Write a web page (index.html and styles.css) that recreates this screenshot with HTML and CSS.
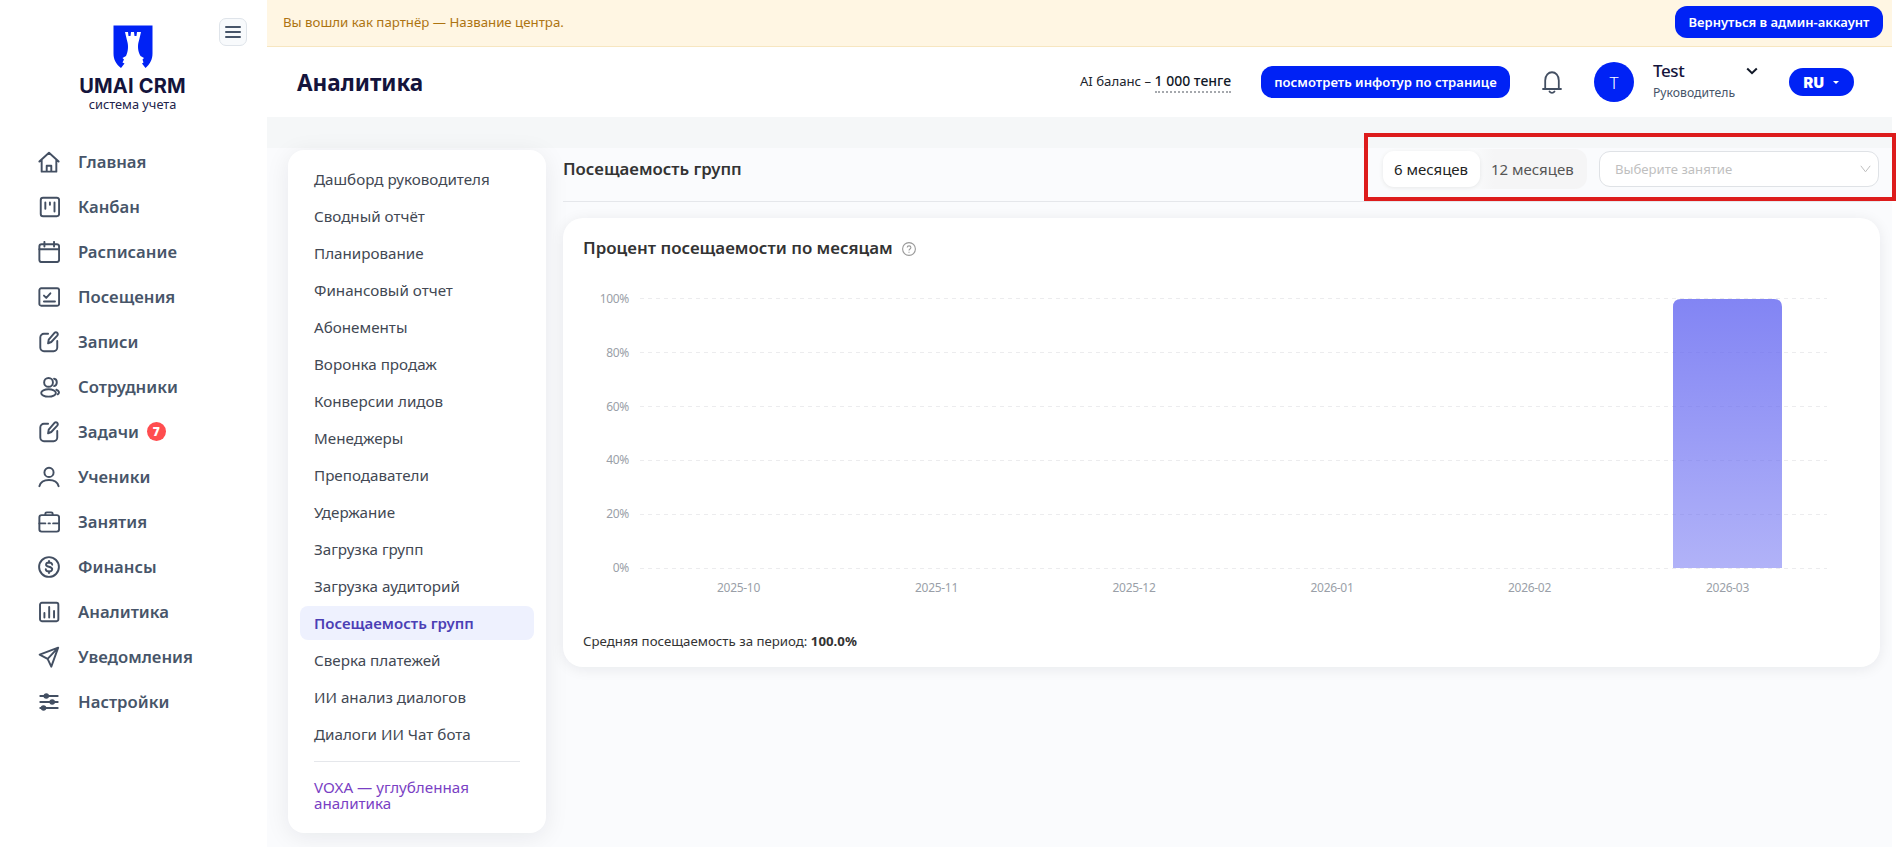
FILE: index.html
```html
<!DOCTYPE html>
<html lang="ru">
<head>
  <meta charset="UTF-8" />
  <meta name="viewport" content="width=device-width, initial-scale=1.0"/>
  <title>UMAI CRM — Аналитика</title>
  <link rel="stylesheet" href="styles.css">
</head>
<body>
  <div class="app">
    <aside class="sidebar">
      <button class="burger" aria-label="Меню"><span></span><span></span><span></span></button>
      <div class="logo">
        <svg width="40" height="43" viewBox="0 0 40 43">
          <path d="M.5.5h39v28c0 6-2.500 10.500-7 14.500L29 38.500l1.500-1-1-3 1.500-1.500-3.500-2c-3-5-3-11-1.500-15.500L28 7h-4l-.5 4h-2L21 7h-3l-.5 4h-2L15 7h-3l2 8.500c1.500 4.500 1.500 10.500-1 15.500l-3.500 2 1.500 1.500-1.500 3 2 1L8 43C3 39 .5 34.500.5 28.500z" fill="#0022f5"/>
        </svg>
        <div class="logo-name">UMAI CRM</div>
        <div class="logo-sub">система учета</div>
      </div>
      <nav class="nav">
        <a class="nav-item"><svg viewBox="0 0 24 24"><path d="M1.500 11.500 12 2l10.500 9.500M4 9.500V22.500h16V9.500M9.500 22.500V16h5v6.500"/></svg><span>Главная</span></a>
        <a class="nav-item"><svg viewBox="0 0 24 24"><rect x="3" y="2" width="20" height="20" rx="2.500"/><path d="M8 7v7M13 7v2.500M18 7v10"/></svg><span>Канбан</span></a>
        <a class="nav-item"><svg viewBox="0 0 24 24"><rect x="1.500" y="3.500" width="21.500" height="19.500" rx="2.500"/><path d="M1.500 9H23M7 1v5M17.500 1v5"/></svg><span>Расписание</span></a>
        <a class="nav-item"><svg viewBox="0 0 24 24"><rect x="1.500" y="2.500" width="21.500" height="19" rx="2"/><path d="M6.500 10.500 9 13l4.500-5M6.500 17h12"/></svg><span>Посещения</span></a>
        <a class="nav-item"><svg viewBox="0 0 24 24"><path d="M11 3H6.500a4 4 0 0 0-4 4V18a4 4 0 0 0 4 4H17a4 4 0 0 0 4-4v-7M11 13.500l.7-4L18 2q1.500-1.200 3 0 1.200 1.500 0 3L14.500 12z"/></svg><span>Записи</span></a>
        <a class="nav-item"><svg viewBox="0 0 24 24"><circle cx="11.500" cy="7" r="4.800"/><ellipse cx="11.500" cy="18.500" rx="8" ry="4"/><path d="M17.500 3c4 .5 4 7 0 8M20 15c3.500 1 3.500 4 1.500 5"/></svg><span>Сотрудники</span></a>
        <a class="nav-item"><svg viewBox="0 0 24 24"><path d="M11 3H6.500a4 4 0 0 0-4 4V18a4 4 0 0 0 4 4H17a4 4 0 0 0 4-4v-7M11 13.500l.7-4L18 2q1.500-1.200 3 0 1.200 1.500 0 3L14.500 12z"/></svg><span>Задачи</span><b class="badge">7</b></a>
        <a class="nav-item"><svg viewBox="0 0 24 24"><circle cx="12" cy="7" r="5"/><path d="M1.500 22c2.500-9 18.500-9 21 0"/></svg><span>Ученики</span></a>
        <a class="nav-item"><svg viewBox="0 0 24 24"><rect x="1.500" y="4.500" width="21.500" height="18" rx="2.500"/><path d="M8 4.500V3q0-1.500 1.500-1.500h5Q16 1.500 16 3v1.500M1.500 13.500H8M11.500 13.500h1.500M16.500 13.500H23"/></svg><span>Занятия</span></a>
        <a class="nav-item"><svg viewBox="0 0 24 24"><circle cx="12" cy="12" r="10.800"/><path d="M15.500 9.500c-.5-3-6.500-3.300-6.700 0C8.700 12.500 15.500 11 15.500 14.500c-.3 3.500-6.700 3-7 0M12 5.500v2M12 16.500v2"/></svg><span>Финансы</span></a>
        <a class="nav-item"><svg viewBox="0 0 24 24"><rect x="2.200" y="2" width="20" height="20" rx="2"/><path d="M7 13v5M12.200 6.500V18M17.500 11v7"/></svg><span>Аналитика</span></a>
        <a class="nav-item"><svg viewBox="0 0 24 24"><path d="M22 1.800 1.800 9.500l8.700 4.500L14.500 22.500zM22 1.800 10.500 14"/></svg><span>Уведомления</span></a>
        <a class="nav-item"><svg viewBox="0 0 24 24"><path d="M2.500 5.500h19M2.500 12h19M2.500 18.500h19"/><circle cx="9" cy="5.500" r="2"/><circle cx="15.500" cy="12" r="2"/><circle cx="6" cy="18.500" r="2"/></svg><span>Настройки</span></a>
      </nav>
    </aside>

    <div class="page">
      <div class="partner-bar">
        <span>Вы вошли как партнёр — Название центра.</span>
        <button class="btn btn-admin">Вернуться в админ-аккаунт</button>
      </div>

      <header class="header">
        <h1>Аналитика</h1>
        <div class="balance">AI баланс – <b>1 000 тенге</b></div>
        <button class="btn btn-tour">посмотреть инфотур по странице</button>
        <svg class="bell" viewBox="0 0 20 23"><path d="M1 18h18M3.200 17.500V9.500c0-11 13.600-11 13.600 0v8M7.500 20.500c1.200 1.800 3.800 1.800 5 0"/></svg>
        <div class="avatar">T</div>
        <div class="user">
          <div class="user-name">Test</div>
          <div class="user-role">Руководитель</div>
        </div>
        <svg class="user-arrow" viewBox="0 0 12 8"><path d="M1.200 1.500 6 6.200l4.800-4.700"/></svg>
        <button class="lang">RU<i></i></button>
      </header>

      <div class="content">
        <div class="submenu">
          <a>Дашборд руководителя</a>
          <a>Сводный отчёт</a>
          <a>Планирование</a>
          <a>Финансовый отчет</a>
          <a>Абонементы</a>
          <a>Воронка продаж</a>
          <a>Конверсии лидов</a>
          <a>Менеджеры</a>
          <a>Преподаватели</a>
          <a>Удержание</a>
          <a>Загрузка групп</a>
          <a>Загрузка аудиторий</a>
          <a class="active">Посещаемость групп</a>
          <a>Сверка платежей</a>
          <a>ИИ анализ диалогов</a>
          <a>Диалоги ИИ Чат бота</a>
          <hr>
          <a class="voxa">VOXA — углубленная аналитика</a>
        </div>

        <main class="main">
          <div class="toolbar">
            <h2>Посещаемость групп</h2>
            <div class="segmented">
              <span class="selected">6 месяцев</span>
              <span>12 месяцев</span>
            </div>
            <div class="select">
              <span>Выберите занятие</span>
              <svg viewBox="0 0 11 8"><path d="M.8.8 5.500 6.800 10.200.8"/></svg>
            </div>
            <div class="highlight"></div>
          </div>

          <section class="card">
            <h3>Процент посещаемости по месяцам
              <svg viewBox="0 0 14 14"><circle cx="7" cy="7" r="6.400"/><path d="M5.200 5.600c.1-2.300 3.700-2.200 3.700 0C8.900 7 7 6.900 7 8.500M7 9.800v1"/></svg>
            </h3>
            <svg class="chart" width="1277" height="330" viewBox="0 0 1277 330">
              <defs>
                <linearGradient id="barFill" x1="0" y1="0" x2="0" y2="1">
                  <stop offset="0" stop-color="#6366f1" stop-opacity=".8"/>
                  <stop offset="1" stop-color="#6366f1" stop-opacity=".5"/>
                </linearGradient>
              </defs>
              <g class="grid">
                <path d="M57 20.500h1187M57 74.500h1187M57 128.500h1187M57 182.500h1187M57 236.500h1187M57 290.500h1187"/>
              </g>
              <path d="M1090 290V29q0-8 8-8h93q8 0 8 8v261z" fill="url(#barFill)"/>
              <g class="ticks-y">
                <text x="46" y="25">100%</text>
                <text x="46" y="79">80%</text>
                <text x="46" y="133">60%</text>
                <text x="46" y="186">40%</text>
                <text x="46" y="240">20%</text>
                <text x="46" y="294">0%</text>
              </g>
              <g class="ticks-x">
                <text x="155.500" y="314">2025-10</text>
                <text x="353.500" y="314">2025-11</text>
                <text x="551" y="314">2025-12</text>
                <text x="749" y="314">2026-01</text>
                <text x="946.500" y="314">2026-02</text>
                <text x="1144.500" y="314">2026-03</text>
              </g>
            </svg>
            <p class="average">Средняя посещаемость за период: <b>100.0%</b></p>
          </section>
        </main>
      </div>
    </div>
  </div>
</body>
</html>
```
FILE: styles.css
```css
* {
  box-sizing: border-box;
}

body {
  margin: 0;
  height: 847px;
  overflow: hidden;
  background: #fff;
  font-family: 'Noto Sans', 'Open Sans', sans-serif;
  color: #333;
}

button {
  border: none;
  font-family: inherit;
  cursor: pointer;
}

h1, h2, h3, p {
  margin: 0;
}

.app {
  display: flex;
  height: 847px;
  padding-right: 4px;
}

/* sidebar */
.sidebar {
  position: relative;
  width: 267px;
  flex: none;
  padding-top: 25px;
  background: #fff;
}

.burger {
  position: absolute;
  top: 18px;
  right: 20px;
  width: 28px;
  height: 28px;
  padding: 0 5px;
  display: flex;
  flex-direction: column;
  justify-content: center;
  gap: 3px;
  border: 1px solid #dfe4ea;
  border-radius: 7px;
  background: #f8fafc;
}

.burger span {
  height: 2px;
  border-radius: 1px;
  background: #475569;
}

.logo {
  display: flex;
  flex-direction: column;
  align-items: center;
  width: 265px;
  height: 114px;
}

.logo svg {
  flex: none;
}

.logo-name {
  margin-top: 9px;
  font: 700 20px/18px Inter, sans-serif;
  letter-spacing: 0.2px;
  color: #14143c;
}

.logo-sub {
  font-size: 12.800px;
  line-height: 18px;
  color: #23234b;
}

.nav-item {
  display: flex;
  align-items: center;
  height: 45px;
  padding-left: 38px;
  font-size: 16.700px;
  font-weight: 600;
  color: #475569;
}

.nav-item svg {
  width: 22px;
  height: 22px;
  margin-right: 18px;
  fill: none;
  stroke: #434f62;
  stroke-width: 2.100;
  stroke-linecap: round;
  stroke-linejoin: round;
}

.badge {
  width: 19px;
  height: 19px;
  margin-left: 8px;
  border-radius: 50%;
  background: #ff4d4f;
  color: #fff;
  font-size: 12px;
  line-height: 19px;
  text-align: center;
}

/* top */
.page {
  flex: 1;
  display: flex;
  flex-direction: column;
  min-width: 0;
}

.partner-bar {
  display: flex;
  align-items: center;
  justify-content: space-between;
  height: 47px;
  padding: 0 9px 2px 16px;
  border-bottom: 1px solid #f7e6c0;
  background: #fff6e3;
  color: #ad7411;
  font-size: 13.250px;
}

.btn {
  height: 32px;
  padding: 0;
  border-radius: 12px;
  background: #0022f5;
  color: #fff;
  font-size: 13px;
  font-weight: 600;
  white-space: nowrap;
}

.btn-admin {
  width: 208px;
}

.btn-tour {
  width: 249px;
  margin-right: 32px;
  font-size: 13.100px;
}

.header {
  display: flex;
  align-items: center;
  height: 70px;
  padding: 0 38px 0 30px;
  background: #fff;
}

h1 {
  flex: 1;
  padding-top: 1px;
  font-size: 22.500px;
  color: #14143c;
}

.balance {
  margin-right: 30px;
  font-size: 13.200px;
  color: #20242c;
  white-space: nowrap;
}

.balance b {
  display: inline-block;
  padding-bottom: 1px;
  border-bottom: 2px dotted #a5a8ad;
  font-size: 14px;
  font-weight: 500;
  color: #111827;
}

.bell {
  width: 20px;
  height: 23px;
  margin-right: 32px;
  fill: none;
  stroke: #434f62;
  stroke-width: 1.800;
  stroke-linecap: round;
}

.avatar {
  width: 40px;
  height: 40px;
  margin-right: 19px;
  border-radius: 50%;
  background: #0022f5;
  color: #fff;
  font-size: 17px;
  font-weight: 300;
  line-height: 42px;
  text-align: center;
}

.user {
  width: 93px;
  padding-bottom: 2px;
}

.user-name {
  font-size: 17px;
  letter-spacing: -0.4px;
  line-height: 22px;
  font-weight: 500;
  color: #14143c;
}

.user-role {
  font-size: 12.200px;
  line-height: 21px;
  color: #475569;
}

.user-arrow {
  width: 12px;
  height: 8px;
  margin: 0 31px 22px 0;
  fill: none;
  stroke: #111827;
  stroke-width: 2;
}

.lang {
  display: flex;
  align-items: center;
  justify-content: center;
  gap: 9px;
  width: 65px;
  height: 28px;
  padding: 0;
  border-radius: 14px;
  background: #0022f5;
  color: #fff;
  font: 900 14.500px Inter, sans-serif;
  letter-spacing: 0.4px;
}

.lang i {
  border: 3px solid transparent;
  border-top-color: #fff;
  border-bottom: none;
}

/* content */
.content {
  flex: 1;
  display: flex;
  align-items: flex-start;
  gap: 17px;
  padding: 33px 12px 0 21px;
  background: linear-gradient(#f5f7f8 31px, #fafbfd 31px);
}

.submenu {
  width: 258px;
  height: 683px;
  padding: 12px;
  border-radius: 16px;
  background: #fff;
  box-shadow: 0 4px 24px rgba(15, 23, 42, 0.08);
}

.submenu a {
  display: block;
  height: 34px;
  margin-bottom: 3px;
  padding-left: 14px;
  border-radius: 8px;
  font-size: 15.200px;
  line-height: 34px;
  color: #424853;
}

.submenu .active {
  background: #eef1fe;
  color: #4b3fb5;
  font-size: 15px;
  font-weight: 600;
}

.submenu hr {
  height: 1px;
  margin: 10px 14px 17px;
  border: none;
  background: #e5e7eb;
}

.submenu .voxa {
  height: 32px;
  line-height: 16px;
  color: #7a3fc4;
}

.main {
  flex: 1;
  min-width: 0;
}

.toolbar {
  position: relative;
  display: flex;
  align-items: center;
  height: 52px;
  padding-bottom: 13px;
  margin-bottom: 16px;
  border-bottom: 1px solid #e5e7eb;
}

h2 {
  flex: 1;
  padding-bottom: 1px;
  font-size: 16.800px;
  font-weight: 600;
}

.segmented {
  display: flex;
  flex: none;
  width: 207px;
  height: 40px;
  padding: 2px;
  margin-right: 12px;
  border-radius: 12px;
  background: linear-gradient(90deg, #fafbfc 45%, #f5f5f6 55%);
  font-size: 15px;
  line-height: 36px;
  color: #555;
}

.segmented span {
  padding: 0 11px;
  border-radius: 11px;
  white-space: nowrap;
}

.segmented .selected {
  width: 97px;
  margin-left: 1px;
  background: #fff;
  box-shadow: 0 1px 4px rgba(0, 0, 0, 0.08);
  color: #222;
}

.select {
  display: flex;
  align-items: center;
  justify-content: space-between;
  width: 280px;
  height: 36px;
  margin-right: 1px;
  padding: 0 7px 0 15px;
  border: 1px solid #dfe2e6;
  border-radius: 11px;
  background: #fff;
  color: #bfbfbf;
  font-size: 13.150px;
}

.select svg {
  width: 11px;
  height: 8px;
  fill: none;
  stroke: #bfbfbf;
}

/* red frame round the filters */
.highlight {
  position: absolute;
  top: -17px;
  right: -16px;
  width: 532px;
  height: 68px;
  border: 4px solid #dd1c1c;
}

.card {
  height: 449px;
  padding: 17px 20px;
  border-radius: 20px;
  background: #fff;
  box-shadow: 0 2px 14px rgba(15, 23, 42, 0.08);
}

h3 {
  display: flex;
  align-items: center;
  gap: 9px;
  height: 24px;
  margin-bottom: 19px;
  font-size: 16.900px;
  font-weight: 600;
}

h3 svg {
  width: 14px;
  height: 14px;
  margin-top: 4px;
  fill: none;
  stroke: #999;
  stroke-width: 1.100;
}

.chart {
  display: block;
}

.grid {
  fill: none;
  stroke: #ececee;
  stroke-dasharray: 4 4;
}

.chart text {
  font-size: 12px;
  letter-spacing: -0.3px;
  fill: #9a9fa8;
}

.ticks-y {
  text-anchor: end;
}

.ticks-x {
  text-anchor: middle;
}

.average {
  margin-top: 23px;
  font-size: 13.250px;
  line-height: 20px;
}
```
